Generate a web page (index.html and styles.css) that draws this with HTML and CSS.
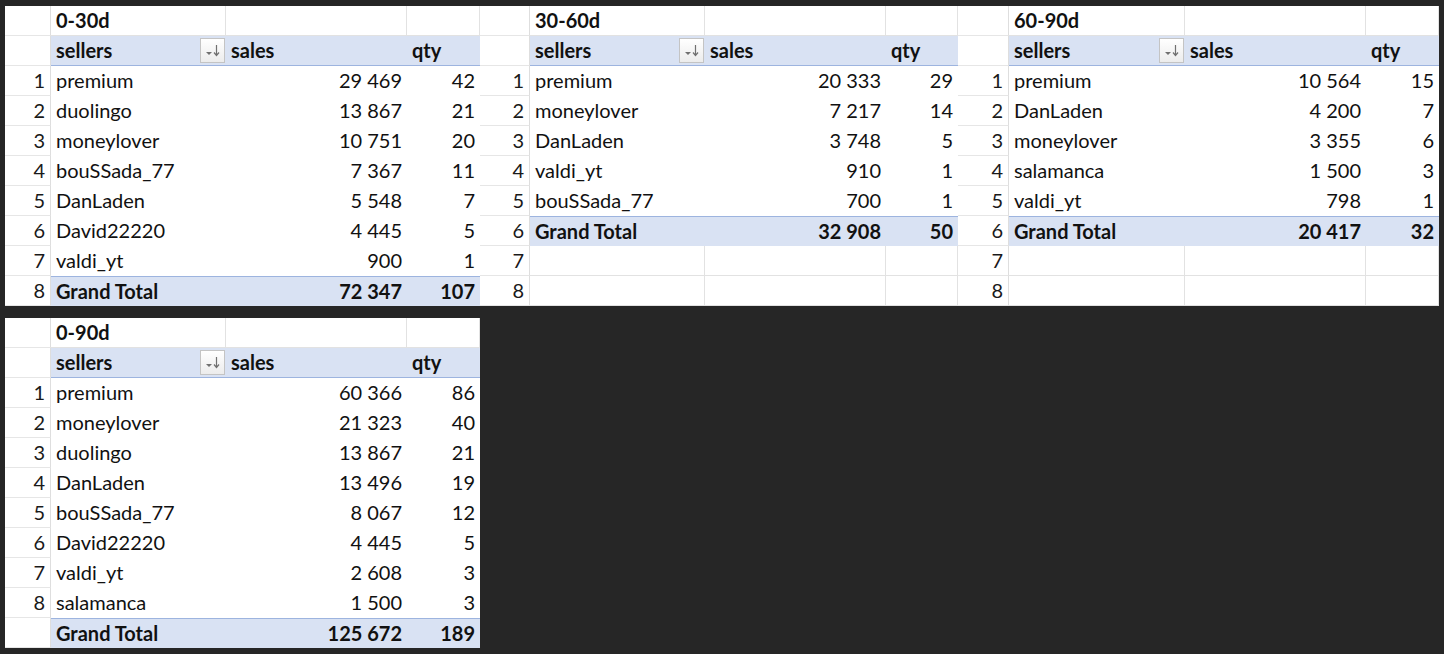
FILE: index.html
```html
<!DOCTYPE html>
<html>
<head>
<meta charset="utf-8">
<link rel="stylesheet" href="styles.css">
</head>
<body>
<div class="panel top">
  <div class="pivot p1">
    <div class="rn"></div><div class="c title">0-30d</div><div class="c grid"></div><div class="c grid"></div>
    <div class="rn"></div><div class="c hd dd-cell">sellers<span class="dd"><svg width="21" height="19" viewBox="0 0 21 19"><path d="M4 11 L10 11 L7 14 Z" fill="#707070"/><path d="M14.5 4 V14 M12 11.5 L14.5 14.5 L17 11.5" stroke="#707070" stroke-width="1.2" fill="none"/></svg></span></div><div class="c hd">sales</div><div class="c hd">qty</div>
    <div class="rn">1</div><div class="c">premium</div><div class="c num">29 469</div><div class="c num">42</div>
    <div class="rn">2</div><div class="c">duolingo</div><div class="c num">13 867</div><div class="c num">21</div>
    <div class="rn">3</div><div class="c">moneylover</div><div class="c num">10 751</div><div class="c num">20</div>
    <div class="rn">4</div><div class="c">bouSSada_77</div><div class="c num">7 367</div><div class="c num">11</div>
    <div class="rn">5</div><div class="c">DanLaden</div><div class="c num">5 548</div><div class="c num">7</div>
    <div class="rn">6</div><div class="c">David22220</div><div class="c num">4 445</div><div class="c num">5</div>
    <div class="rn">7</div><div class="c">valdi_yt</div><div class="c num">900</div><div class="c num">1</div>
    <div class="rn">8</div><div class="c gt">Grand Total</div><div class="c gt num">72 347</div><div class="c gt num">107</div>
  </div>
  <div class="pivot p2">
    <div class="rn"></div><div class="c title">30-60d</div><div class="c grid"></div><div class="c grid"></div>
    <div class="rn"></div><div class="c hd dd-cell">sellers<span class="dd"><svg width="21" height="19" viewBox="0 0 21 19"><path d="M4 11 L10 11 L7 14 Z" fill="#707070"/><path d="M14.5 4 V14 M12 11.5 L14.5 14.5 L17 11.5" stroke="#707070" stroke-width="1.2" fill="none"/></svg></span></div><div class="c hd">sales</div><div class="c hd">qty</div>
    <div class="rn">1</div><div class="c">premium</div><div class="c num">20 333</div><div class="c num">29</div>
    <div class="rn">2</div><div class="c">moneylover</div><div class="c num">7 217</div><div class="c num">14</div>
    <div class="rn">3</div><div class="c">DanLaden</div><div class="c num">3 748</div><div class="c num">5</div>
    <div class="rn">4</div><div class="c">valdi_yt</div><div class="c num">910</div><div class="c num">1</div>
    <div class="rn">5</div><div class="c">bouSSada_77</div><div class="c num">700</div><div class="c num">1</div>
    <div class="rn">6</div><div class="c gt">Grand Total</div><div class="c gt num">32 908</div><div class="c gt num">50</div>
    <div class="rn">7</div><div class="c grid"></div><div class="c grid"></div><div class="c grid"></div>
    <div class="rn">8</div><div class="c grid"></div><div class="c grid"></div><div class="c grid"></div>
  </div>
  <div class="pivot p3">
    <div class="rn"></div><div class="c title">60-90d</div><div class="c grid"></div><div class="c grid"></div>
    <div class="rn"></div><div class="c hd dd-cell">sellers<span class="dd"><svg width="21" height="19" viewBox="0 0 21 19"><path d="M4 11 L10 11 L7 14 Z" fill="#707070"/><path d="M14.5 4 V14 M12 11.5 L14.5 14.5 L17 11.5" stroke="#707070" stroke-width="1.2" fill="none"/></svg></span></div><div class="c hd">sales</div><div class="c hd">qty</div>
    <div class="rn">1</div><div class="c">premium</div><div class="c num">10 564</div><div class="c num">15</div>
    <div class="rn">2</div><div class="c">DanLaden</div><div class="c num">4 200</div><div class="c num">7</div>
    <div class="rn">3</div><div class="c">moneylover</div><div class="c num">3 355</div><div class="c num">6</div>
    <div class="rn">4</div><div class="c">salamanca</div><div class="c num">1 500</div><div class="c num">3</div>
    <div class="rn">5</div><div class="c">valdi_yt</div><div class="c num">798</div><div class="c num">1</div>
    <div class="rn">6</div><div class="c gt">Grand Total</div><div class="c gt num">20 417</div><div class="c gt num">32</div>
    <div class="rn">7</div><div class="c grid"></div><div class="c grid"></div><div class="c grid"></div>
    <div class="rn">8</div><div class="c grid"></div><div class="c grid"></div><div class="c grid"></div>
  </div>
</div>
<div class="panel bottom">
  <div class="pivot p1">
    <div class="rn"></div><div class="c title">0-90d</div><div class="c grid"></div><div class="c grid"></div>
    <div class="rn"></div><div class="c hd dd-cell">sellers<span class="dd"><svg width="21" height="19" viewBox="0 0 21 19"><path d="M4 11 L10 11 L7 14 Z" fill="#707070"/><path d="M14.5 4 V14 M12 11.5 L14.5 14.5 L17 11.5" stroke="#707070" stroke-width="1.2" fill="none"/></svg></span></div><div class="c hd">sales</div><div class="c hd">qty</div>
    <div class="rn">1</div><div class="c">premium</div><div class="c num">60 366</div><div class="c num">86</div>
    <div class="rn">2</div><div class="c">moneylover</div><div class="c num">21 323</div><div class="c num">40</div>
    <div class="rn">3</div><div class="c">duolingo</div><div class="c num">13 867</div><div class="c num">21</div>
    <div class="rn">4</div><div class="c">DanLaden</div><div class="c num">13 496</div><div class="c num">19</div>
    <div class="rn">5</div><div class="c">bouSSada_77</div><div class="c num">8 067</div><div class="c num">12</div>
    <div class="rn">6</div><div class="c">David22220</div><div class="c num">4 445</div><div class="c num">5</div>
    <div class="rn">7</div><div class="c">valdi_yt</div><div class="c num">2 608</div><div class="c num">3</div>
    <div class="rn">8</div><div class="c">salamanca</div><div class="c num">1 500</div><div class="c num">3</div>
    <div class="rn"></div><div class="c gt">Grand Total</div><div class="c gt num">125 672</div><div class="c gt num">189</div>
  </div>
</div>
</body>
</html>
```
FILE: styles.css
```css
html, body {
  margin: 0;
  background: #262626;
}
body {
  padding: 6px 5px;
  font-family: Lato, "Liberation Sans", sans-serif;
  font-size: 20px;
  color: #111;
}
.panel {
  background: #fff;
  display: flex;
}
.top {
  width: 1434px;
}
.bottom {
  width: 475px;
  margin-top: 12px;
}
.pivot {
  display: grid;
  grid-auto-rows: 30px;
}
.p1 { grid-template-columns: 46px 175px 181px 73px; }
.p2 { grid-template-columns: 50px 175px 181px 72px; }
.p3 { grid-template-columns: 51px 176px 181px 73px; }

.rn, .c {
  box-sizing: border-box;
  height: 30px;
  line-height: 29px;
  white-space: nowrap;
  overflow: hidden;
}
.rn {
  text-align: right;
  padding-right: 5px;
  border-right: 1px solid #dedede;
  border-bottom: 1px solid #e6e6e6;
  color: #1a1a1a;
}
.c {
  padding-left: 5px;
  padding-right: 5px;
}
.title {
  font-weight: 700;
  border-right: 1px solid #e2e2e2;
  border-bottom: 1px solid #e2e2e2;
}
.grid {
  border-right: 1px solid #e2e2e2;
  border-bottom: 1px solid #e2e2e2;
}
.hd {
  font-weight: 700;
  background: #d9e2f3;
  border-bottom: 1px solid #9db4df;
}
.dd-cell {
  position: relative;
}
.dd {
  position: absolute;
  right: 1px;
  top: 2px;
  width: 25px;
  height: 25px;
  box-sizing: border-box;
  border: 1px solid #c4c4c4;
  background: linear-gradient(#ffffff, #ececec);
  display: flex;
  align-items: center;
  justify-content: center;
}
.num {
  text-align: right;
}
.gt {
  font-weight: 700;
  background: #d9e2f3;
  border-top: 1px solid #9db4df;
  line-height: 28px;
}
```
